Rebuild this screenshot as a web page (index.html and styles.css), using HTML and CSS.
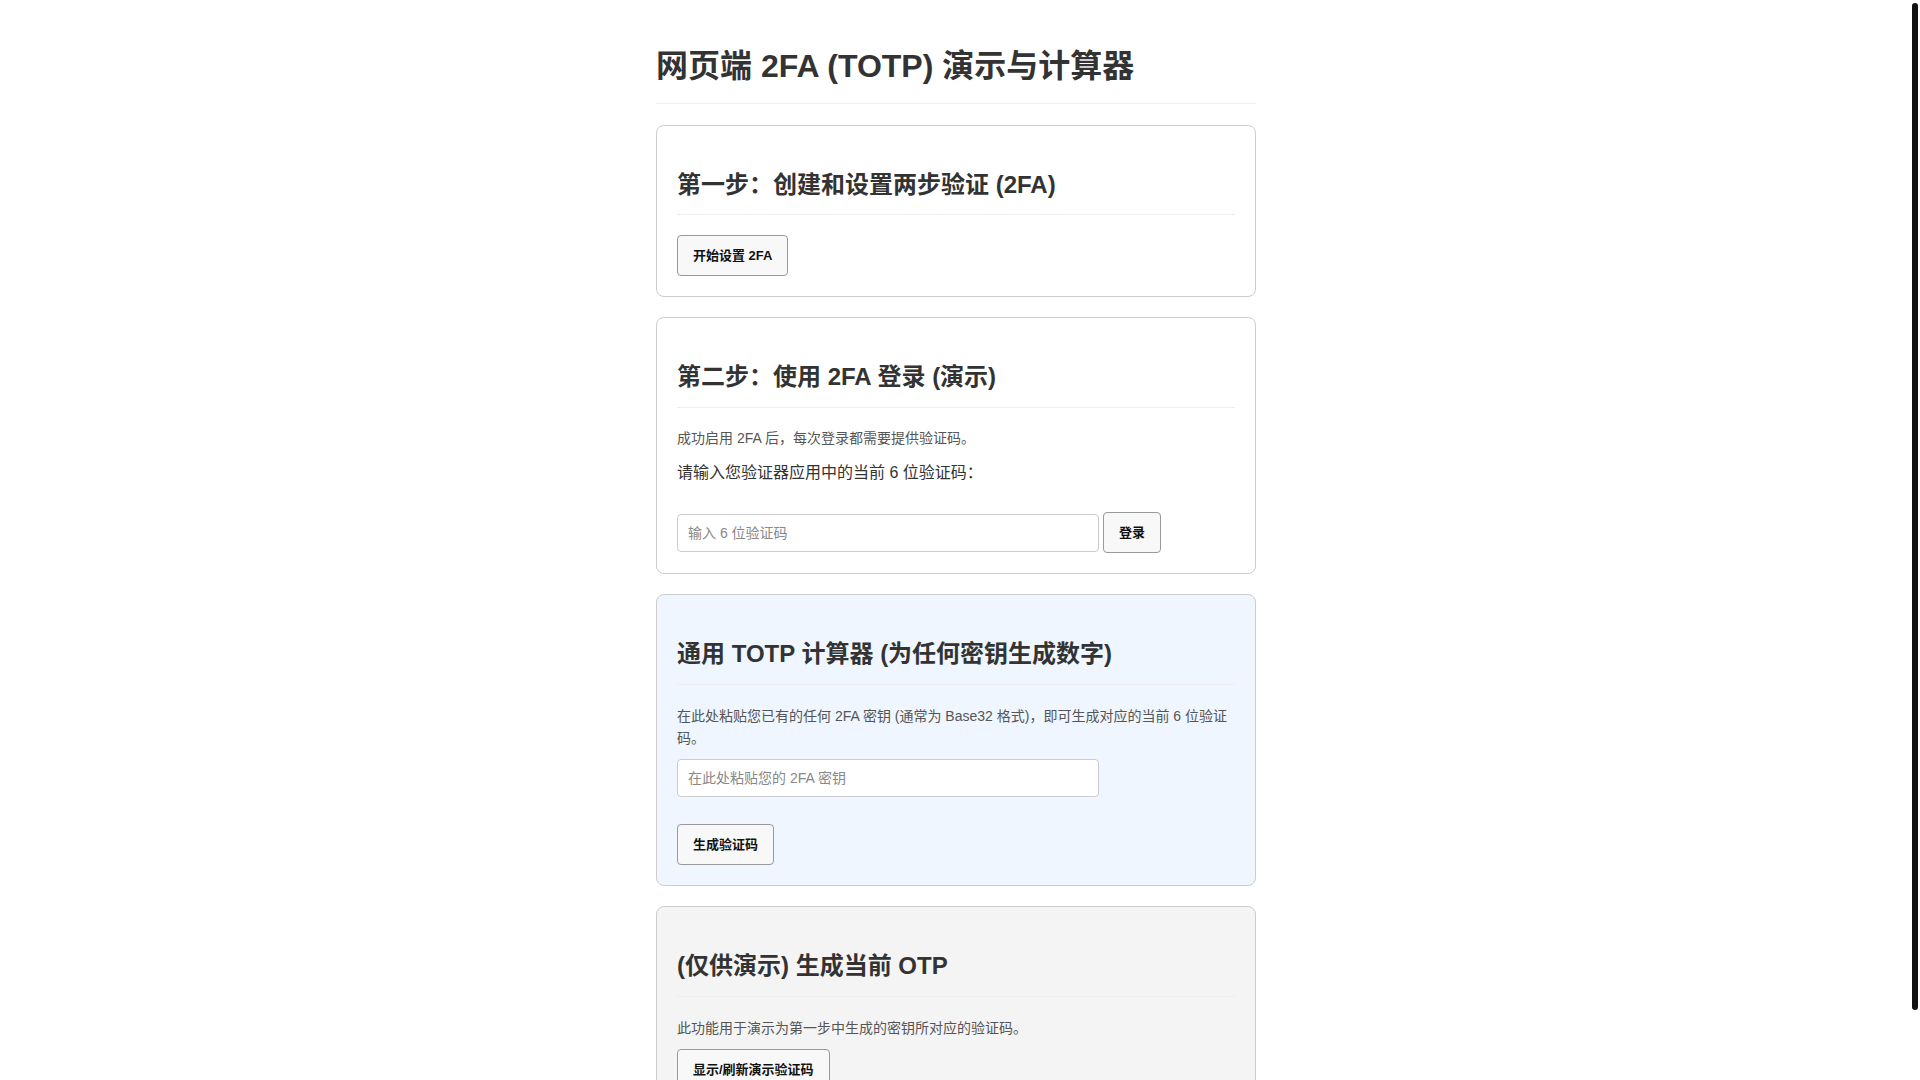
FILE: index.html
```html
<!DOCTYPE html>
<html lang="zh-CN">
<head>
<meta charset="utf-8">
<title>网页端 2FA (TOTP) 演示与计算器</title>
<link rel="stylesheet" href="styles.css">
</head>
<body>
<h1 class="page-title">网页端 2FA (TOTP) 演示与计算器</h1>

<section class="card">
  <h2 class="card-title">第一步：创建和设置两步验证 (2FA)</h2>
  <div class="actions">
    <button class="btn" type="button">开始设置 2FA</button>
  </div>
</section>

<section class="card">
  <h2 class="card-title">第二步：使用 2FA 登录 (演示)</h2>
  <p class="desc">成功启用 2FA 后，每次登录都需要提供验证码。</p>
  <p class="field-label">请输入您验证器应用中的当前 6 位验证码：</p>
  <div class="input-row">
    <input class="text-input" type="text" placeholder="输入 6 位验证码">
    <button class="btn" type="button">登录</button>
  </div>
</section>

<section class="card card-blue">
  <h2 class="card-title">通用 TOTP 计算器 (为任何密钥生成数字)</h2>
  <p class="desc">在此处粘贴您已有的任何 2FA 密钥 (通常为 Base32 格式)，即可生成对应的当前 6 位验证码。</p>
  <input class="text-input block-input" type="text" placeholder="在此处粘贴您的 2FA 密钥">
  <div class="actions actions-spaced">
    <button class="btn" type="button">生成验证码</button>
  </div>
</section>

<section class="card card-grey">
  <h2 class="card-title">(仅供演示) 生成当前 OTP</h2>
  <p class="desc">此功能用于演示为第一步中生成的密钥所对应的验证码。</p>
  <div class="actions">
    <button class="btn" type="button">显示/刷新演示验证码</button>
  </div>
</section>

<div class="scroll-thumb" aria-hidden="true"></div>
</body>
</html>
```

FILE: styles.css
```css
html {
  background: #fff;
  padding-right: 8px;
}

body {
  margin: 0 auto;
  padding: 20px;
  max-width: 600px;
  font-family: "Liberation Sans", Arial, "Noto Sans CJK SC", sans-serif;
  line-height: 1.6;
  color: #333;
  background: #fff;
}

.scroll-thumb {
  position: fixed;
  top: 3px;
  right: 2px;
  width: 6px;
  height: 1007px;
  border-radius: 3px;
  background: #111;
}

.page-title {
  font-size: 32px;
  font-weight: bold;
  margin: 21.44px 0;
  padding-bottom: 10px;
  border-bottom: 1px solid #eee;
  color: #333;
}

.card {
  border: 1px solid #ccc;
  border-radius: 8px;
  padding: 20px;
  margin-bottom: 20px;
  background: #fff;
}

.card-blue {
  background: #eff6ff;
}

.card-grey {
  background: #f4f4f4;
}

.card-title {
  font-size: 24px;
  font-weight: bold;
  margin: 19.92px 0;
  padding-bottom: 10px;
  border-bottom: 1px solid #eee;
  color: #333;
}

.desc {
  font-size: 14px;
  color: #555;
  margin: 10px 0;
}

.field-label {
  font-size: 16px;
  color: #333;
  margin: 10px 0 27px;
}

.actions {
  display: flex;
  align-items: center;
}

.actions-spaced {
  margin-top: 27px;
}

.input-row {
  display: flex;
  align-items: center;
  gap: 4px;
}

.text-input {
  width: 400px;
  padding: 10px;
  border: 1px solid #ccc;
  border-radius: 4px;
  font-family: "Liberation Sans", Arial, "Noto Sans CJK SC", sans-serif;
  font-size: 14px;
  line-height: 16px;
  color: #333;
  background: #fff;
  margin: 0;
}

.text-input::placeholder {
  color: #888;
}

.block-input {
  display: block;
}

.btn {
  font-family: "Liberation Sans", Arial, "Noto Sans CJK SC", sans-serif;
  font-size: 13px;
  font-weight: bold;
  line-height: 19px;
  padding: 10px 15px;
  border: 1px solid #999;
  border-radius: 4px;
  background: #f8f8f8;
  color: #111;
  margin: 0;
  cursor: pointer;
}
```
